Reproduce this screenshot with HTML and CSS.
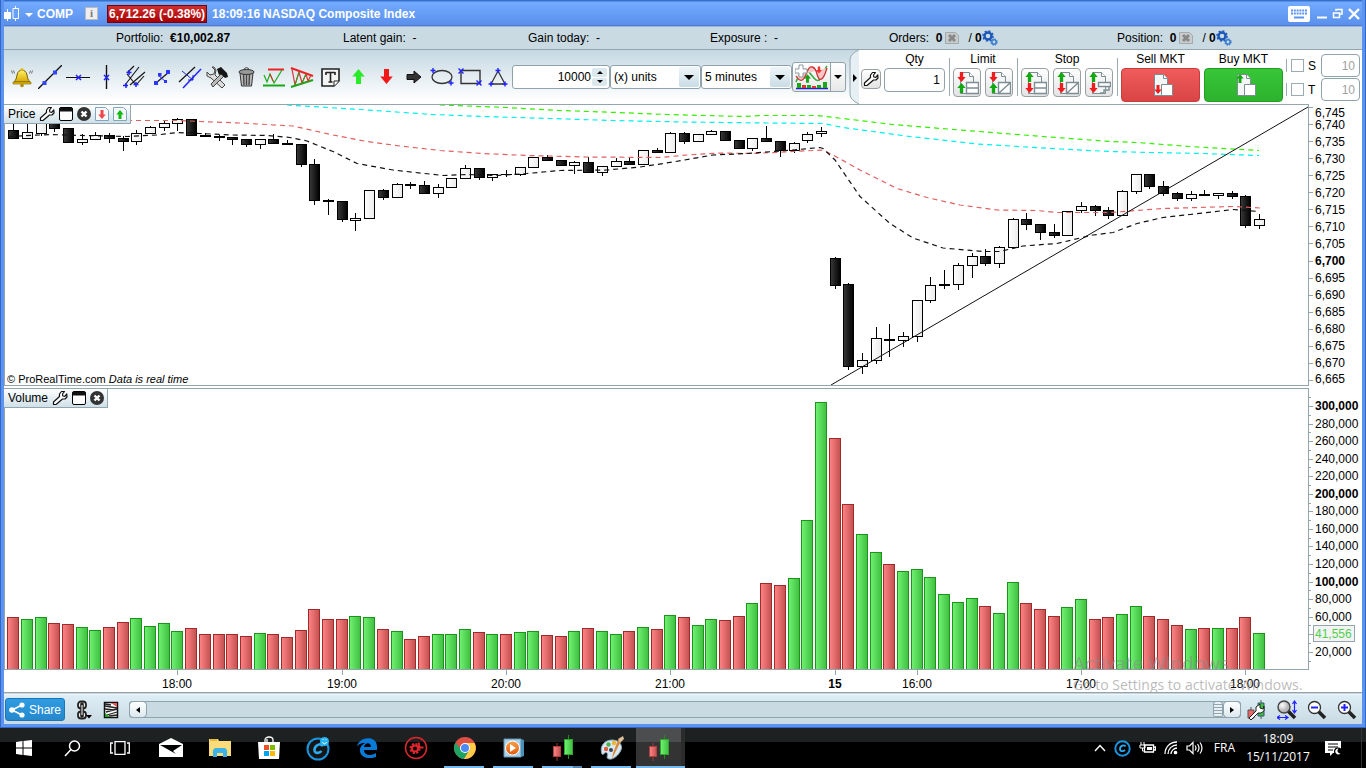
FILE: index.html
```html
<!DOCTYPE html>
<html lang="en">
<head>
<meta charset="utf-8">
<title>COMP - NASDAQ Composite Index</title>
<link rel="stylesheet" href="styles.css">
</head>
<body>
<svg class="defs" aria-hidden="true">
  <defs>
    <linearGradient id="gUp"><stop offset="0" stop-color="#72f272"/><stop offset="1" stop-color="#3fbf3f"/></linearGradient>
    <linearGradient id="gDown"><stop offset="0" stop-color="#ff8585"/><stop offset="1" stop-color="#c45050"/></linearGradient>
    <linearGradient id="gBlack"><stop offset="0" stop-color="#3a3a3a"/><stop offset="1" stop-color="#000"/></linearGradient>
    <linearGradient id="gWhite"><stop offset="0" stop-color="#fff"/><stop offset="1" stop-color="#ebebeb"/></linearGradient>
    <linearGradient id="gBell" x2="0" y2="1"><stop offset="0" stop-color="#fff36a"/><stop offset="1" stop-color="#d9a800"/></linearGradient>
    <linearGradient id="gMedia" x2="0" y2="1"><stop offset="0" stop-color="#f9a34b"/><stop offset="1" stop-color="#e2580c"/></linearGradient>
    <radialGradient id="gLens" cx=".35" cy=".35"><stop offset="0" stop-color="#fff"/><stop offset="1" stop-color="#b5b5b5"/></radialGradient>
  </defs>
  <symbol id="wrench" viewBox="0 0 16 16"><path d="M9.500 1.500h3l-2 2.500.3 2 2 .3 2-2.300.2 3-2 2h-2.500L4 14.500H1.500v-2.500L7.500 6.500V4z" fill="#fff" stroke="#111" stroke-width="1.200" stroke-linejoin="round"/></symbol>
  <symbol id="winbox" viewBox="0 0 14 14"><rect x=".5" y=".5" width="13" height="13" rx="1.500" fill="#fff" stroke="#000"/><path d="M.5 1h13v3.500H.5z" fill="#111"/></symbol>
  <symbol id="close" viewBox="0 0 14 14"><circle cx="7" cy="7" r="7" fill="#333"/><path d="M4.500 4.500l5 5m0-5l-5 5" stroke="#fff" stroke-width="2.400"/></symbol>
  <symbol id="dn" viewBox="0 0 10 12"><path d="M3 0h4v6h3l-5 6-5-6h3z"/></symbol>
  <symbol id="up" viewBox="0 0 10 12"><path d="M3 12h4V6h3L5 0 0 6h3z"/></symbol>
  <symbol id="doc" viewBox="0 0 22 24"><path d="M5.500 1.500h9l4 4v17h-13z" fill="#f4f6f6" stroke="#7d8d94"/><path d="M14.500 1.500v4h4" fill="#fff" stroke="#7d8d94"/></symbol>
  <symbol id="gears" viewBox="0 0 16 16"><circle cx="6" cy="6" r="3.500" fill="none" stroke="#1d58b8" stroke-width="2.400"/><circle cx="6" cy="6" r="5" fill="none" stroke="#1d58b8" stroke-width="1.600" stroke-dasharray="2 1.900"/><circle cx="12" cy="12" r="2.200" fill="none" stroke="#3b7cd0" stroke-width="1.600"/><circle cx="12" cy="12" r="3.300" fill="none" stroke="#3b7cd0" stroke-dasharray="1.400 1.200"/></symbol>
  <symbol id="cancel" viewBox="0 0 14 12"><path d="M.5.5h10l3 3v8H.5z" fill="#c9cccc" stroke="#a5a9a9"/><path d="M4 3l6 6m0-6L4 9" stroke="#888" stroke-width="3"/></symbol>
  <symbol id="candles" viewBox="0 0 22 26"><path d="M5 8v18" stroke="#9a3a3a"/><rect x="1.500" y="11.500" width="7" height="10" fill="url(#gDown)" stroke="#b04040"/><path d="M16.500 0v24" stroke="#1a8f1a"/><rect x="12.500" y="4.500" width="8" height="15" fill="url(#gUp)" stroke="#2ea52e"/></symbol>
</svg>

<main class="window">
  <header class="titlebar">
    <svg width="16" height="16" viewBox="0 0 16 16"><path d="M3.500 3v12" stroke="#fff"/><path d="M0 6h7v7H0z" fill="#fff"/><path d="M11.500 0v15" stroke="#fff"/><path d="M9 2.500h5.500v10H9z" fill="#68a2f8" stroke="#fff"/></svg>
    <span class="caret"></span>
    <strong class="symbol">COMP</strong>
    <span class="info-badge">i</span>
    <strong class="quote">6,712.26 (-0.38%)</strong>
    <strong>18:09:16</strong><strong class="name">NASDAQ Composite Index</strong>
    <span class="grow"></span>
    <svg class="keyboard" width="22" height="16" viewBox="0 0 22 16"><rect width="22" height="16" rx="2" fill="#fff"/><path d="M3 4.500h16M3 7.500h16" stroke="#5b93ee" stroke-width="2" stroke-dasharray="2 .8"/><path d="M6 11.500h10" stroke="#5b93ee" stroke-width="2"/></svg>
    <button class="win-btn" aria-label="Minimize"><svg width="12" height="12" viewBox="0 0 12 12"><path d="M1 9.500h10" stroke="#fff" stroke-width="2"/></svg></button>
    <button class="win-btn" aria-label="Restore"><svg width="12" height="12" viewBox="0 0 12 12"><path d="M4 3V1.500h6v4.500H8M1.500 5h6v4.500h-6z" fill="none" stroke="#fff" stroke-width="1.500"/></svg></button>
    <button class="win-btn" aria-label="Close"><svg width="12" height="12" viewBox="0 0 12 12"><path d="M1 1l10 10M11 1L1 11" stroke="#fff" stroke-width="2.400"/></svg></button>
  </header>

  <section class="account">
    <span>Portfolio:&nbsp; <b>€10,002.87</b></span>
    <span>Latent gain:&nbsp; -</span>
    <span>Gain today:&nbsp; -</span>
    <span>Exposure :&nbsp; -</span>
    <span class="count">Orders:&nbsp; <b>0</b><svg class="cancel" width="14" height="12"><use href="#cancel"/></svg>/ <b>0</b><svg width="16" height="16"><use href="#gears"/></svg></span>
    <span class="count">Position:&nbsp; <b>0</b><svg class="cancel" width="14" height="12"><use href="#cancel"/></svg>/ <b>0</b><svg width="16" height="16"><use href="#gears"/></svg></span>
  </section>

  <section class="toolbar">
    <div class="tools">
      <button aria-label="Alert"><svg viewBox="0 0 24 24"><path d="M4 17c2-2 2.500-4 3-7C7.500 6.500 10 5 12 5s4.500 1.500 5 5c.5 3 1 5 3 7z" fill="url(#gBell)" stroke="#7a6200"/><path d="M3 17h18v2H3z" fill="#e5bd12" stroke="#7a6200" stroke-width=".6"/><circle cx="12" cy="20.500" r="1.800" fill="#b08c00"/><circle cx="12" cy="4.500" r="1.500" fill="#e5bd12"/><path d="M3.500 5.500l1 3M1.500 5.500l1 3M20.500 5.500l-1 3M22.500 5.500l-1 3" stroke="#555" stroke-width=".8"/></svg></button>
      <button aria-label="Line"><svg viewBox="0 0 24 24"><path d="M0 24L24 0" stroke="#111" stroke-width="1.300"/><path d="M4.500 16h4v4h-4zM15 5.500h4v4h-4z" fill="#3344ff"/></svg></button>
      <button aria-label="Horizontal line"><svg viewBox="0 0 24 24"><path d="M0 12.500h24" stroke="#111"/><path d="M10 10l5 5m0-5l-5 5" stroke="#22f" stroke-width="1.500"/></svg></button>
      <button aria-label="Vertical line"><svg viewBox="0 0 24 24"><path d="M12.500 0v24" stroke="#111" stroke-width="1.400"/><path d="M10 10l5 5m0-5l-5 5" stroke="#22f" stroke-width="1.500"/></svg></button>
      <button aria-label="Pitchfork"><svg viewBox="0 0 24 24"><path d="M3 20L17 2M8 20L23 7M5 9l9 11M5 8L12 1M14 20l8-9" stroke="#111" stroke-width="1.100"/><path d="M4 18v5m-3-2.500h5M14 17v5m-2.500-2.500h5M7 5v5M4.500 7.500h5" stroke="#22f" stroke-width="1.500"/></svg></button>
      <button aria-label="Segment"><svg viewBox="0 0 24 24"><path d="M6 18L19 7" stroke="#111" stroke-width="1.200"/><path d="M8 10l8 7" stroke="#22f"/><path d="M4 16h4v4H4zM16 5h4v4h-4zM8 8h3.500v3.500H8zM14 15h3v3h-3z" fill="#2b36ff"/></svg></button>
      <button aria-label="Channel"><svg viewBox="0 0 24 24"><path d="M1 17L17 2" stroke="#111" stroke-width="1.200"/><path d="M5 23L23 4" stroke="#22f" stroke-width="1.500"/><path d="M4 6l11 9m0-5v5h-5" stroke="#22c" fill="none"/></svg></button>
      <button aria-label="Tools"><svg viewBox="0 0 24 24"><path d="M6 2l3 3-1 4-4 1-3-3v4l4 2 11 10 3-3L9 10l1-5-2-3z" fill="#ddd" stroke="#444"/><path d="M5 19L15 9l3 2L7 22z" fill="#bbb" stroke="#444"/><path d="M11 4l4-2 6 6 1 4-3 1-4-4-2 1z" fill="#151515"/></svg></button>
      <button aria-label="Delete"><svg viewBox="0 0 24 24"><path d="M6 8h13l-1.500 13h-10z" fill="#bbb" stroke="#333"/><path d="M9.500 9l.5 11M12.500 9v11M15.500 9l-.5 11" stroke="#444" stroke-width="1.400"/><ellipse cx="12.500" cy="7" rx="7.500" ry="2.500" fill="#999" stroke="#333"/><path d="M10 5c0-3 5-3 5 0" fill="none" stroke="#333"/></svg></button>
      <button aria-label="Range"><svg viewBox="0 0 24 24"><path d="M6 4.500h16" stroke="#e22" stroke-width="2"/><path d="M1 20.500h22" stroke="#1aa81a" stroke-width="2"/><path d="M2 10l3 7 3-8 4 9 8-13" fill="none" stroke="#1aa81a" stroke-width="1.200"/><path d="M8 9l3 7" stroke="#e22"/></svg></button>
      <button aria-label="Triangle pattern"><svg viewBox="0 0 24 24"><path d="M1 3l22 8" stroke="#e22" stroke-width="2"/><path d="M1 22l22-7" stroke="#1aa81a" stroke-width="2"/><path d="M2 4l3 16 4-13 3 11 4-9 2 7 3-6" fill="none" stroke="#d33" stroke-width="1.200"/><path d="M5 20L9 7m3 11l4-9" stroke="#1aa81a"/></svg></button>
      <button aria-label="Text"><svg viewBox="0 0 24 24"><path d="M4 4h17v12l-5 5H4z" fill="#f4f4f4" stroke="#222" stroke-width="1.600"/><path d="M16 21v-5h5" fill="#fff" stroke="#222"/><path d="M8 7.500h9M12.500 8v9M10.500 17h4M8 7v3M17 7v3" stroke="#222" stroke-width="1.600" fill="none"/></svg></button>
      <button aria-label="Up arrow"><svg viewBox="0 0 24 24"><use href="#up" x="6" y="4" width="13" height="15" fill="#2bea2b"/></svg></button>
      <button aria-label="Down arrow"><svg viewBox="0 0 24 24"><use href="#dn" x="6" y="4" width="13" height="15" fill="#f01818"/></svg></button>
      <button aria-label="Right arrow"><svg viewBox="0 0 24 24"><path d="M5 9.500h7V6l7 6-7 6v-3.500H5z" fill="#333" stroke="#111"/></svg></button>
      <button aria-label="Ellipse"><svg viewBox="0 0 24 24"><ellipse cx="12" cy="12" rx="10" ry="6.500" fill="none" stroke="#333" stroke-width="1.300"/><path d="M3 3v5M.5 5.500h5M21 15.500v5m-2.500-2.500h5" stroke="#22f" stroke-width="1.400"/></svg></button>
      <button aria-label="Rectangle"><svg viewBox="0 0 24 24"><path d="M3 5.500h19v13H3z" fill="none" stroke="#333" stroke-width="1.400"/><path d="M.5 3.500l5 5m0-5l-5 5M18.500 15.500l5 5m0-5l-5 5" stroke="#22f" stroke-width="1.400"/></svg></button>
      <button aria-label="Triangle"><svg viewBox="0 0 24 24"><path d="M12 6l7 13H5z" fill="none" stroke="#333" stroke-width="1.300"/><path d="M12 3v5M9.500 5.500h5M5 16.500v5M2.500 19h5M19 16.500v5m-2.500-2.500h5" stroke="#22f" stroke-width="1.400"/></svg></button>
    </div>
    <div class="spin">
      <input type="text" value="10000" aria-label="Amount">
      <div class="steps"><button aria-label="Increase"><i class="tri-up"></i></button><button aria-label="Decrease"><i class="tri-down"></i></button></div>
    </div>
    <div class="pick"><select aria-label="Unit"><option>(x) units</option></select></div>
    <div class="pick"><select aria-label="Timeframe"><option>5 minutes</option></select></div>
    <div class="indicator">
      <button aria-label="Add indicator"><svg width="34" height="26" viewBox="0 0 34 26"><path d="M1 18C5 8 9 2 14 8s8 12 12 6 4-10 6-12" fill="none" stroke="#2faf3f" stroke-width="1.600"/><path d="M1 12c5 8 8 4 11-4s8-6 10 2 6 8 10-6" fill="#f7c7c7" stroke="#c33" stroke-width="1.300"/><path d="M4 1h4v4h4v4H8v4H4V9H0V5h4z" fill="#fff" stroke="#8b9aa0"/><use href="#up" x="9" y="10" width="7" height="9" fill="#13a013"/><use href="#dn" x="21" y="2" width="6" height="8" fill="#e33"/><path d="M1 24.500h32" stroke="#22d" stroke-width="1.500"/><path d="M2 19h4v5H2zM12 21h4v3h-4zM22 21h4v3h-4zM28 18h4v6h-4z" fill="#1aa81a"/><path d="M7 21h4v3H7zM17 22h4v2h-4z" fill="#d33"/></svg></button>
      <button class="more" aria-label="More"><i class="tri-down big"></i></button>
    </div>
    <div class="trade">
      <svg class="edge" width="10" height="54" viewBox="0 0 10 54"><path d="M10 0h-.5Q1 4 1 10v34q0 6 9 10" fill="#e6eff3" stroke="#96a8b0"/><path d="M4 24l4 4-4 4z" fill="#000"/></svg>
      <div class="setup"><button class="sq wrench" aria-label="Order settings"><svg width="16" height="16"><use href="#wrench"/></svg></button></div>
      <label class="group qty">Qty<input type="text" value="1"></label>
      <div class="group sep"><span>Limit</span><div class="pair">
        <button class="sq" aria-label="Limit sell buy"><svg viewBox="0 0 24 24"><use href="#doc" width="22" height="24"/><use href="#dn" x="2" y="1" width="9" height="10" fill="#ee1c1c"/><use href="#up" x="2" y="12" width="9" height="10" fill="#12a812"/><path d="M11.500 11.500h12v11h-12zM11 17h13" fill="#fff" stroke="#7d8d94" stroke-width="1.400"/></svg></button>
        <button class="sq" aria-label="Limit by line"><svg viewBox="0 0 24 24"><use href="#doc" width="22" height="24"/><use href="#dn" x="2" y="1" width="9" height="10" fill="#ee1c1c"/><use href="#up" x="2" y="12" width="9" height="10" fill="#12a812"/><path d="M11.500 11.500h12v11h-12zM12 22L23 12" fill="#fff" stroke="#7d8d94" stroke-width="1.400"/></svg></button></div></div>
      <div class="group sep"><span>Stop</span><div class="pair">
        <button class="sq" aria-label="Stop order"><svg viewBox="0 0 24 24"><use href="#doc" width="22" height="24"/><use href="#up" x="2" y="1" width="9" height="10" fill="#12a812"/><use href="#dn" x="2" y="12" width="9" height="10" fill="#ee1c1c"/><path d="M11.500 11.500h12v11h-12zM11 17h13" fill="#fff" stroke="#7d8d94" stroke-width="1.400"/></svg></button>
        <button class="sq" aria-label="Stop by line"><svg viewBox="0 0 24 24"><use href="#doc" width="22" height="24"/><use href="#up" x="2" y="1" width="9" height="10" fill="#12a812"/><use href="#dn" x="2" y="12" width="9" height="10" fill="#ee1c1c"/><path d="M11.500 11.500h12v11h-12zM12 22L23 12" fill="#fff" stroke="#7d8d94" stroke-width="1.400"/></svg></button>
        <button class="sq" aria-label="Trailing stop"><svg viewBox="0 0 24 24"><use href="#doc" width="22" height="24"/><use href="#up" x="2" y="1" width="9" height="10" fill="#12a812"/><use href="#dn" x="2" y="12" width="9" height="10" fill="#ee1c1c"/><path d="M11.500 11.500h12v4h-12zM22 16v3h-5v3h-4" fill="#fff" stroke="#7d8d94" stroke-width="1.400"/></svg></button></div></div>
      <div class="group sep"><span>Sell MKT</span><button class="mkt sell" aria-label="Sell at market"><svg viewBox="0 0 24 24"><use href="#doc" width="22" height="24"/><path d="M12.500 11.500h11v11h-11z" fill="#fff" stroke="#7d8d94"/><use href="#dn" x="5" y="12" width="8" height="9" fill="#ee1c1c"/></svg></button></div>
      <div class="group"><span>Buy MKT</span><button class="mkt buy" aria-label="Buy at market"><svg viewBox="0 0 24 24"><use href="#doc" width="22" height="24"/><path d="M12.500 11.500h11v11h-11z" fill="#fff" stroke="#7d8d94"/><use href="#up" x="4" y="1" width="8" height="9" fill="#12a812"/></svg></button></div>
      <div class="stops">
        <div><input type="checkbox" id="st-s"><label for="st-s">S</label><input type="text" value="10" aria-label="Stop distance"></div>
        <div><input type="checkbox" id="st-t"><label for="st-t">T</label><input type="text" value="10" aria-label="Target distance"></div>
      </div>
    </div>
  </section>

  <section class="charts">
    <div class="chart price" id="price">
      <div class="tag"><span>Price</span><svg width="16" height="16"><use href="#wrench"/></svg><svg width="14" height="14"><use href="#winbox"/></svg><svg width="14" height="14"><use href="#close"/></svg><svg width="14" height="14" viewBox="0 0 14 14"><path d="M.5.5h10l3 3v10H.5z" fill="#f5f9fb" stroke="#83a6c0"/><use href="#dn" x="3" y="3" width="8" height="9" fill="#f04848"/></svg><svg width="14" height="14" viewBox="0 0 14 14"><path d="M.5.5h10l3 3v10H.5z" fill="#f5f9fb" stroke="#83a6c0"/><use href="#up" x="3" y="3" width="8" height="9" fill="#12b812"/></svg></div>
      <div class="credit">© ProRealTime.com <i>Data is real time</i></div>
    </div>
    <div class="chart volume" id="volume">
      <div class="tag"><span>Volume</span><svg width="16" height="16"><use href="#wrench"/></svg><svg width="14" height="14"><use href="#winbox"/></svg><svg width="14" height="14"><use href="#close"/></svg></div>
      <div class="activate"><p>Activate Windows</p><span>Go to Settings to activate Windows.</span></div>
    </div>
  </section>

  <footer class="bottombar">
    <button class="share"><svg width="16" height="16" viewBox="0 0 16 16"><path d="M13 3L3 8l10 5" fill="none" stroke="#fff" stroke-width="1.600"/><circle cx="13" cy="3" r="2.600" fill="#fff"/><circle cx="3" cy="8" r="2.800" fill="#fff"/><circle cx="13" cy="13" r="2.600" fill="#fff"/></svg>Share</button>
    <svg class="chain" width="18" height="20" viewBox="0 0 18 20"><rect x="3" y="1.500" width="8" height="7" rx="3" fill="#eee" stroke="#222" stroke-width="1.800"/><rect x="3" y="11.500" width="8" height="7" rx="3" fill="#eee" stroke="#222" stroke-width="1.800"/><path d="M7 4v12" stroke="#222" stroke-width="3.600" stroke-linecap="round"/><path d="M7 5v10" stroke="#ddd" stroke-width="1.200"/><path d="M11 15h6l-3 3.500z"/></svg>
    <svg width="16" height="18" viewBox="0 0 16 18"><path d="M1.500 1.500h13v15h-13z" fill="#fff" stroke="#111" stroke-width="1.500"/><path d="M2 5l12 2M2 8l9 1M3 11l11-3M4 14l10-3M2 3l6 1M6 15l8-1" stroke="#222" stroke-width="1.300"/><path d="M8 2h6v4z" fill="#e55"/><path d="M2 16v-4l5 4z" fill="#1aa81a"/></svg>
    <div class="scroll"><button aria-label="Scroll left"><i class="tri-left"></i></button><span class="track"></span><span class="thumb"></span><button aria-label="Scroll right"><i class="tri-right"></i></button></div>
    <button class="plain" aria-label="Chart settings"><svg viewBox="0 0 20 20"><path d="M4 7v13" stroke="#555"/><path d="M1 10h6v8H1z" fill="#e66" stroke="#555"/><path d="M14 0v19" stroke="#555"/><path d="M11 3h6v13h-6z" fill="#3cc43c" stroke="#357"/><path d="M2 18l7-7V7l4-3v4l3 1 1-3v5l-3 2h-3l-7 7z" fill="#fff" stroke="#222"/></svg></button>
    <button class="plain" aria-label="Fit"><svg viewBox="0 0 20 20"><path d="M10 10l8 8" stroke="#222" stroke-width="3.500"/><circle cx="7" cy="7" r="6" fill="url(#gLens)" stroke="#444" stroke-width="1.400"/><path d="M17.500 2v10M15.500 4l2-3 2 3M15.500 10l2 3 2-3M1 17.500h9M3 15.500l-3 2 3 2M8 15.500l3 2-3 2" fill="none" stroke="#22f" stroke-width="1.200"/></svg></button>
    <button class="plain" aria-label="Zoom out"><svg viewBox="0 0 20 20"><path d="M11 11l7 7" stroke="#222" stroke-width="3.500"/><circle cx="7.500" cy="7.500" r="6" fill="#fff" stroke="#333" stroke-width="1.300"/><path d="M4 7.500h7" stroke="#22f" stroke-width="2"/></svg></button>
    <button class="plain" aria-label="Zoom in"><svg viewBox="0 0 20 20"><path d="M11 11l7 7" stroke="#222" stroke-width="3.500"/><circle cx="7.500" cy="7.500" r="6" fill="#fff" stroke="#333" stroke-width="1.300"/><path d="M4 7.500h7M7.500 4v7" stroke="#22f" stroke-width="2"/></svg></button>
  </footer>
</main>

<nav class="taskbar">
  <button aria-label="Start"><svg width="16" height="16" viewBox="0 0 16 16" fill="#fff"><path d="M0 2l6.500-1v6.500H0zM7.500.9L16 0v7.500H7.500zM0 8.500h6.500V15L0 14zM7.500 8.500H16V16l-8.500-1z"/></svg></button>
  <button aria-label="Search"><svg width="17" height="17" viewBox="0 0 17 17" fill="none" stroke="#fff" stroke-width="1.500"><circle cx="10.500" cy="6" r="5"/><path d="M7 9.500L1 16"/></svg></button>
  <button aria-label="Task view"><svg width="20" height="14" viewBox="0 0 20 14" fill="none" stroke="#fff" stroke-width="1.300"><path d="M5 .7h10v12.600H5zM3 2H.7v10H3M17 2h2.300v10H17"/></svg></button>
  <button class="first" aria-label="Mail"><svg width="24" height="20" viewBox="0 0 24 20"><path d="M0 6l12-6 12 6v13H0z" fill="#fff"/><path d="M1 7h22l-9 6 3 3L1 7z" fill="#000"/></svg></button>
  <button aria-label="File Explorer"><svg width="22" height="20" viewBox="0 0 22 20"><path d="M0 1h9l1 2h12v15H0z" fill="#fbdc7a"/><path d="M1 1h7v2H1z" fill="#e9b93a"/><path d="M4 19v-7l2-2h10l2 2v7h-4v-4H8v4z" fill="#3bb2ea"/></svg></button>
  <button aria-label="Store"><svg width="24" height="24" viewBox="0 0 24 24"><path d="M8 7V4c0-4 8-4 8 0v3M10 7V3" fill="none" stroke="#fff" stroke-width="1.300"/><path d="M1 6h22l-1 17H2z" fill="#fff"/><path d="M7 9h5v5H7z" fill="#f25022"/><path d="M13 9h5v5h-5z" fill="#7fba00"/><path d="M7 15h5v5H7z" fill="#00a4ef"/><path d="M13 15h5v5h-5z" fill="#ffb900"/></svg></button>
  <button aria-label="Cacaoweb"><svg width="26" height="26" viewBox="0 0 26 26"><circle cx="13" cy="14" r="10.500" fill="#161616" stroke="#1a96e0" stroke-width="2"/><path d="M17 11.500c0-4-7-2-7.500 3-.5 4.500 5 4 7 1.500" fill="none" stroke="#29aef5" stroke-width="2.600"/><circle cx="19.500" cy="6.500" r="4.500" fill="#27b3f3"/><path d="M17.500 7c1 2.500 3 2.500 4 0M18 5v-.8M21 5v-.8" stroke="#fff" fill="none"/></svg></button>
  <button aria-label="Edge"><svg width="20" height="20" viewBox="0 0 20 20"><path d="M0 9C1-1 20-4 20 9v3H7c0 6 8 6 12 3v4C11 22 2 19 3 11c1-4 4-5 5-6-5 0-7 2-8 4zM7 9h7c0-5-6-5-7 0z" fill="#0a7ad8"/></svg></button>
  <button aria-label="Game Booster"><svg width="24" height="24" viewBox="0 0 24 24" fill="none"><circle cx="12" cy="12" r="10.500" stroke="#e0262c" stroke-width="1.500"/><circle cx="11" cy="12.500" r="3" stroke="#e0262c" stroke-width="2"/><circle cx="11" cy="12.500" r="4.600" stroke="#e0262c" stroke-width="2" stroke-dasharray="2.200 1.400"/><path d="M15 6.500v5h4.500" stroke="#e0262c" stroke-width="1.800"/></svg></button>
  <button class="open" aria-label="Chrome"><svg width="22" height="22" viewBox="0 0 22 22"><circle cx="11" cy="11" r="11" fill="#dd5144"/><path d="M1.500 5.500A11 11 0 0 0 10 22l5-8.500-8-1z" fill="#1da462"/><path d="M10 22A11 11 0 0 0 20.500 6H11l4.500 7z" fill="#ffcd46"/><circle cx="11" cy="11" r="5" fill="#fff"/><circle cx="11" cy="11" r="4" fill="#4c8bf5"/></svg></button>
  <button class="open" aria-label="Media player"><svg width="22" height="20" viewBox="0 0 22 20"><path d="M1 1h17v18H1z" fill="#a9d2e8" stroke="#6295b5"/><path d="M18 1l3 1v16l-3 1z" fill="#4990b8"/><circle cx="9.500" cy="10" r="7" fill="url(#gMedia)" stroke="#fff"/><path d="M7 6l6 4-6 4z" fill="#fff"/></svg></button>
  <button class="open double" aria-label="ProRealTime"><svg width="22" height="26"><use href="#candles"/></svg></button>
  <button class="open" aria-label="Paint"><svg width="24" height="24" viewBox="0 0 24 24"><path d="M2 18C-1 10 5 4 12 4s11 5 9 10-8 10-12 9 0-4-2-6-4 3-5 1z" fill="#d8e9f5" stroke="#8ab"/><circle cx="6" cy="13" r="2.200" fill="#e25a3a"/><circle cx="8.500" cy="8.500" r="2.200" fill="#4db04a"/><circle cx="14" cy="7" r="2.200" fill="#f1b52a"/><circle cx="11" cy="14" r="2" fill="#345"/><path d="M12 23l9-18-3-1-5 13z" fill="#d98a3c"/><path d="M18 3l5-3 1 3-4 4z" fill="#ddc09a"/></svg></button>
  <button class="open active" aria-label="ProRealTime chart"><svg width="22" height="26"><use href="#candles"/></svg></button>
  <span class="grow"></span>
  <div class="tray">
    <svg width="12" height="8" viewBox="0 0 12 8"><path d="M1 7l5-5.500L11 7" fill="none" stroke="#fff" stroke-width="1.400"/></svg>
    <svg width="17" height="17" viewBox="0 0 17 17"><circle cx="8.500" cy="8.500" r="7.200" fill="none" stroke="#1a96e0" stroke-width="2"/><path d="M11.500 6.500c-1-2-5.500-1-5.500 2.500 0 3 3.500 2.500 5 1" fill="none" stroke="#29aef5" stroke-width="1.800"/></svg>
    <svg width="17" height="12" viewBox="0 0 17 12"><path d="M5.500 3h9v7h-9zM15 5h1.500v3H15" fill="none" stroke="#fff" stroke-width="1.300"/><path d="M8 5h5v3H8z" fill="#fff"/><path d="M2 0v3M5 0v3M1 3h5v3H1zM3.500 6v3h2" fill="none" stroke="#fff"/></svg>
    <svg width="14" height="14" viewBox="0 0 14 14" fill="none" stroke="#fff" stroke-width="1.300"><path d="M1 13C1 6 6 1 13 1M4 13c0-5 4-9 9-9M7 13c0-3 3-6 6-6"/><circle cx="11.500" cy="11.500" r="1.200" fill="#fff"/></svg>
    <svg width="17" height="14" viewBox="0 0 17 14" fill="none" stroke="#fff" stroke-width="1.200"><path d="M1 5h2.500L7 1.500v11L3.500 9H1zM9 4.500q2 2.500 0 5M11.500 3q3 4 0 8M14 1.500q4 5.500 0 11"/></svg>
    <span class="lang">FRA</span>
    <div class="clock"><span>18:09</span><span>15/11/2017</span></div>
    <svg class="note" width="18" height="18" viewBox="0 0 18 18"><path d="M1 2h16v12H9l-3 3v-3H1z" fill="#fff"/><path d="M4 5h10M4 8h10M4 11h5" stroke="#000" stroke-width="1.200"/><circle cx="14" cy="12.500" r="4" fill="#000"/><path d="M14.500 9.500a3 3 0 1 0 2 5c-3 0-4-3-2-5z" fill="#fff"/></svg>
  </div>
</nav>
<script src="chart.js"></script>
</body>
</html>
```

FILE: styles.css
```css
* { box-sizing: border-box; }
body { margin: 0; min-height: 100vh; display: flex; flex-direction: column; background: #000; color: #000; font: 12px/16px "Liberation Sans", Arial, sans-serif; }
button, input, select { font: inherit; color: inherit; margin: 0; padding: 0; border: 0; background: none; }
svg { display: block; flex: none; }
.defs { position: absolute; width: 0; height: 0; }
.grow { flex: 1; }
i[class^="tri"] { display: block; width: 0; height: 0; border: 3px solid transparent; }
.tri-up { border-top: 0 !important; border-bottom-color: #000 !important; }
.tri-down { border-bottom: 0 !important; border-top-color: #000 !important; }
i.tri-down.big { border-width: 4px; }
.tri-left { border-left: 0 !important; border-right: 4px solid #000 !important; }
.tri-right { border-right: 0 !important; border-left: 4px solid #000 !important; }

.window { flex: 1; display: flex; flex-direction: column; padding: 0 4px 4px; background: #5b93ee; box-shadow: inset 1px 0 #3168c8, inset -1px -1px #3168c8; }

.titlebar { display: flex; align-items: center; height: 27px; color: #fff; background: linear-gradient(#3570cc 1px, #73abff 2px, #5a90ec 25px, #3a68b8 26px, #fff 27px); }
.caret { margin: 2px 4px 0 5px; border: 4px solid transparent; border-top-color: #fff; border-bottom: 0; }
.info-badge { width: 13px; height: 13px; margin: 0 9px 0 12px; background: #eee; border: 1px solid #bbb; color: #777; font: bold 11px/11px "Liberation Serif", serif; text-align: center; }
.quote { height: 18px; padding: 0 1px; margin-right: 5px; line-height: 17px; background: linear-gradient(#d03030, #a80000); border: 1px solid #700; }
.name { margin-left: 3px; }
.keyboard { margin-right: 4px; }
.win-btn { width: 16px; display: flex; justify-content: center; }

.account { display: grid; grid-template-columns: 227fr 185fr 182fr 179fr 228fr 245fr; align-items: center; height: 23px; padding-left: 112px; background: #c9dae3; border-bottom: 1px solid #93a5ad; }
.count { display: flex; align-items: center; white-space: pre; }
.cancel { margin: 0 9px 0 3px; }

.toolbar { display: flex; align-items: center; height: 54px; background: linear-gradient(#c5d8e2, #fff 50px); overflow: hidden; }
.tools { display: flex; flex: none; padding-left: 4px; }
.tools button { width: 28px; height: 28px; display: flex; align-items: center; justify-content: center; }
.tools svg { width: 24px; height: 24px; }
.spin, .pick, .indicator { flex: none; height: 24px; border: 1px solid #8fa3ad; border-radius: 3px; background: #fff; display: flex; }
.spin { width: 98px; padding: 2px; }
.spin input { flex: 1; width: 0; text-align: right; padding-right: 1px; }
.steps { width: 15px; display: flex; flex-direction: column; gap: 1px; }
.steps button { flex: 1; display: flex; align-items: center; justify-content: center; background: #dbe8ee; border-radius: 2px; }
.pick { position: relative; width: 91px; }
.pick select { width: 100%; padding-left: 3px; appearance: none; }
.pick::before { content: ""; position: absolute; right: 1px; top: 1px; bottom: 1px; width: 20px; background: linear-gradient(#eef5f8, #c9dce5); border-radius: 2px; pointer-events: none; }
.pick::after { content: ""; position: absolute; right: 6px; top: 9px; border: 5px solid transparent; border-top-color: #000; border-bottom: 0; pointer-events: none; }
.indicator { width: 54px; height: 30px; background: linear-gradient(#fff, #e8e8e8); }
.indicator button { flex: 1; display: flex; align-items: center; justify-content: center; }
.indicator .more { flex: none; width: 15px; border-left: 1px solid #8fa3ad; }

.trade { flex: 1; min-width: 0; align-self: stretch; display: flex; margin-left: 3px; }
.trade > :not(.edge) { background: #fff; }
.setup { padding: 19px 1px 0 2px; }
.group { flex: none; display: flex; flex-direction: column; align-items: center; padding: 2px 2px 0; gap: 1px; position: relative; line-height: 15px; }
.sep { padding-left: 6px; }
.sep::before { content: ""; position: absolute; left: 2px; top: 8px; bottom: 8px; border-left: 1px solid #9aabb2; }
.pair { display: flex; gap: 4px; }
.sq { width: 28px; height: 29px; border: 1px solid #98a0a4; border-radius: 4px; background: linear-gradient(#fff, #e3e3e3); display: flex; align-items: center; justify-content: center; }
.sq svg { width: 24px; height: 24px; }
.sq.wrench { width: 20px; height: 20px; }
.sq.wrench svg { width: 16px; height: 16px; }
.qty input { width: 61px; height: 24px; padding-right: 4px; border: 1px solid #8fa3ad; border-radius: 4px; text-align: right; }
.mkt { width: 79px; height: 34px; display: flex; align-items: center; justify-content: center; border-radius: 4px; }
.mkt svg { width: 24px; height: 24px; }
.sell { background: linear-gradient(#f05c5c, #d94444); border: 1px solid #c83c3c; }
.buy { background: linear-gradient(#38c638, #2db22d); border: 1px solid #229c22; }
.stops { flex: 1; min-width: 0; display: flex; flex-direction: column; gap: 1px; padding: 4px 2px 0 1px; }
.stops div { display: flex; align-items: center; gap: 4px; padding-left: 5px; position: relative; }
.stops div::before { content: ""; position: absolute; left: 0; top: 5px; bottom: 5px; border-left: 1px solid #9aabb2; }
.stops input[type="checkbox"] { flex: none; appearance: none; width: 13px; height: 13px; border: 1px solid #9aabb2; background: #fff; }
.stops label { width: 9px; }
.stops input[type="text"] { flex: 1; width: 0; height: 23px; padding-right: 4px; border: 1px solid #8fa3ad; border-radius: 4px; text-align: right; color: #a0a0a0; }

.charts { flex: 1; display: flex; flex-direction: column; min-height: 0; background: #fff; }
.chart { position: relative; flex: 284 1 0; min-height: 0; overflow: hidden; }
.chart.volume { flex-grow: 304; }
.plot { position: absolute; left: 0; top: 0; }
.plot rect, .plot .crisp { shape-rendering: crispEdges; }
.plot text { font: 12px "Liberation Sans", Arial, sans-serif; }
.plot text.strong { font-weight: bold; }
.tag { position: absolute; z-index: 1; left: 0; top: 0; display: flex; align-items: center; gap: 4px; height: 20px; padding: 0 3px 0 4px; background: linear-gradient(#fff, #cfe0e8); border: solid #93a5ad; border-width: 1px 1px 1px 0; }
.credit { position: absolute; z-index: 1; left: 3px; bottom: 2px; font-size: 11px; line-height: 14px; }
.activate { position: absolute; z-index: 1; right: 52px; bottom: -3px; width: 237px; color: rgba(140, 140, 140, .6); font: 14px/20px "Open Sans", sans-serif; white-space: nowrap; pointer-events: none; }
.activate p { margin: 0; font-size: 19px; line-height: 24px; }

.bottombar { display: flex; align-items: center; gap: 10px; height: 32px; padding: 3px 5px 0 1px; background: linear-gradient(#93a5ad 1px, #fff 2px, #deeef6 3px, #c9dae3); }
.share { display: flex; align-items: center; gap: 4px; width: 60px; height: 23px; padding-left: 3px; background: linear-gradient(#2f9ce2, #2588cd); border: 1px solid #1b76b8; border-radius: 3px; color: #fff; }
.scroll { flex: 1; display: flex; height: 17px; border: 1px solid #8fa3ad; border-radius: 3px; background: #c9dae3; }
.scroll button { width: 16px; display: flex; align-items: center; justify-content: center; background: linear-gradient(#fff, #dce9ef); border-radius: 3px; outline: 1px solid #8fa3ad; }
.track { flex: 1; }
.thumb { width: 8px; margin-right: 2px; outline: 1px solid #8fa3ad; border-radius: 2px; background: repeating-linear-gradient(#e5eff4 0 2px, #93a5ad 2px 3px); }
.plain { width: 20px; height: 20px; }
.plain svg { width: 20px; height: 20px; }
.scroll + .plain { margin-left: -4px; }

.taskbar { display: flex; height: 40px; background: linear-gradient(#1e2122 14px, #000 14px); color: #fff; font: 12px/18px "Open Sans", sans-serif; }
.taskbar button { width: 49px; display: flex; align-items: center; justify-content: center; position: relative; }
.taskbar button:nth-child(-n+3) { width: 48px; }
.taskbar .first { margin-left: 2px; }
.open::after { content: ""; position: absolute; left: 4px; right: 5px; bottom: 0; height: 2px; background: #76b9ed; }
.double::after { border-right: 9px solid #5686ad; }
.active { background: linear-gradient(#4c4d4e 14px, #333 14px); border-right: 4px solid #2c2c2c; }
.active::after { left: 0; right: -4px; }
.tray { display: flex; align-items: center; gap: 8px; padding-right: 19px; border-right: 1px solid #333; margin-right: 4px; }
.lang { margin-left: 3px; }
.clock { display: flex; flex-direction: column; text-align: center; width: 66px; margin-left: 2px; }
.note { margin-left: 5px; }
```

FILE: chart.js
```js
// Each candle: [filled, high, bodyTop, bodyBottom, low] in scale units (104..388 down the panel).
const candles = [
  [1,122,130,138,138],[0,122,132,138,138],[0,122,122,133,135],[1,120,120,128,131],[1,128,128,142,142],
  [0,134,139,142,144],[0,132,135,139,139],[1,133,135,138,142],[1,136,138,141,150],[0,130,133,141,144],
  [0,126,127,133,133],[0,121,123,127,130],[0,118,119,123,130],[1,119,119,135,135],[1,133,135,136,136],
  [1,135,136,137,140],[1,137,137,139,144],[1,139,139,144,146],[0,139,139,144,148],[1,134,139,143,143],
  [1,140,143,144,144],[1,144,144,164,166],[1,159,164,200,204],[1,199,200,201,214],[1,201,201,219,221],
  [0,213,218,220,230],[0,190,190,218,218],[1,189,190,197,199],[0,183,184,197,197],[1,182,184,185,188],
  [1,181,185,193,193],[0,184,187,193,197],[0,178,178,187,187],[0,165,168,178,178],[1,168,168,177,179],
  [0,174,174,177,180],[1,170,174,174,176],[0,167,167,174,175],[0,157,157,167,167],[1,155,157,160,160],
  [1,160,160,165,165],[0,161,162,165,173],[1,157,162,172,172],[0,166,166,172,175],[0,158,161,166,166],
  [1,158,161,164,164],[0,150,150,164,164],[1,148,150,152,152],[0,132,133,152,152],[1,132,133,141,143],
  [0,134,134,141,141],[0,130,131,134,134],[1,131,131,140,140],[1,140,140,148,148],[0,138,138,148,150],
  [1,126,138,141,141],[1,141,141,150,156],[0,142,143,150,152],[0,132,134,140,142],[0,127,131,133,136],
  [1,257,258,285,288],[1,283,284,366,369],[0,353,360,366,373],[0,327,338,360,363],[1,324,339,340,356],
  [0,332,336,340,346],[0,300,300,336,341],[0,277,285,300,302],[1,270,284,285,288],[0,263,265,284,289],
  [0,253,256,265,277],[1,249,256,263,265],[0,246,247,263,267],[0,218,219,247,247],[1,213,219,224,229],
  [1,224,224,232,239],[1,224,232,235,237],[0,211,211,235,235],[0,202,206,210,212],[1,205,206,210,215],
  [1,207,210,215,218],[0,190,191,215,215],[0,174,174,191,193],[1,174,174,186,188],[1,181,186,193,195],
  [1,192,193,198,200],[0,191,194,198,200],[1,190,194,195,195],[0,193,193,195,198],[1,191,193,196,198],
  [1,195,196,225,227],[0,214,219,225,228]
];
// Top of each volume bar; a negative value marks a falling period.
const volumes = [
  -617,619,617,-623,-624,627,630,-627,-622,618,626,623,631,-628,-634,-634,-634,-636,633,-634,-637,-630,-609,-619,-619,
  616,617,-629,631,-639,-636,634,634,629,-632,634,-634,632,631,-635,-636,631,-628,631,634,-631,627,-629,615,-617,625,
  619,-620,-616,603,-583,-585,578,520,402,-438,-504,534,552,-564,571,569,577,594,602,598,-606,613,582,-603,-609,-616,
  607,599,-619,-617,614,606,-616,-619,-625,629,-628,628,-628,-617,633
];
const averages = {
  '#33f000': [440,105,507,107.5,560,110.5,617,112.5,667,114.5,743,116.5,763,115.5,817,115.5,843,118.5,893,124.5,960,130,1043,136.5,1110,141.5,1137,142.5,1190,146.5,1259,150.5],
  '#00f0f0': [287,105,360,109.5,433,114.5,483,116.5,550,118.5,613,120.5,683,122,767,123,823,123.5,843,127.5,910,136.5,977,144,1060,149,1110,151.5,1150,152.5,1203,153.5,1259,155.5],
  '#e06060': [127,120.5,180,120.5,200,121.5,240,123,293,126,333,135,367,141.5,400,146,440,150.5,483,153.5,527,155.5,587,157,660,157.5,687,155,720,153,753,153.5,793,151.5,823,150,833,155,860,170,897,188.5,927,197.5,960,205,997,210,1037,210.5,1057,212.5,1110,212.5,1163,208.5,1233,206.5,1260,208],
  '#111111': [8,136.5,50,134.5,83,135.5,127,136.5,157,135,177,132.5,200,133.5,233,135,267,135.5,290,137.5,307,141,333,151.5,357,163.5,393,170,443,175.5,467,174.5,497,175.5,527,173.5,560,170.5,607,170,640,167,673,162,713,155,747,153.5,793,150,820,147.5,823,148.5,835,160,860,196.5,890,223.5,913,238,943,248,983,251.5,1000,251.5,1023,246,1057,243.5,1093,235,1113,232.5,1137,223.5,1163,217.5,1190,214.5,1233,209.5,1259,211.5]
};
const FRAME = '#93a5ad';
const AXIS = 54;

const line = (x1, y1, x2, y2, color, cls = 'crisp') =>
  `<line class="${cls}" x1="${x1}" y1="${y1}" x2="${x2}" y2="${y2}" stroke="${color}"/>`;
const text = (x, y, label, strong, anchor = 'start') =>
  `<text x="${x}" y="${y}" text-anchor="${anchor}"${strong ? ' class="strong"' : ''}>${label}</text>`;

function scales(box, top, span) {
  const w = box.clientWidth, h = box.clientHeight, right = w - AXIS;
  return {
    w, h, right,
    x: v => (v - 4) * right / 1304,
    y: v => (v - top) * h / span,
    center: i => Math.round((9.2 + 13.69 * i) * right / 1304)
  };
}

function mount(box, s, body) {
  const old = box.querySelector('.plot');
  if (old) old.remove();
  box.insertAdjacentHTML('afterbegin', `<svg class="plot" width="${s.w}" height="${s.h}">${body}</svg>`);
}

function drawPrice() {
  const box = document.getElementById('price');
  const s = scales(box, 104, 284);
  const bottom = Math.floor(s.y(385)) + .5;
  let out = '';
  candles.forEach(([filled, high, top, low, tail], i) => {
    const c = s.center(i), px = v => Math.floor(s.y(v));
    out += line(c + .5, px(high), c + .5, px(top), '#000') + line(c + .5, px(low), c + .5, px(tail) + 1, '#000');
    out += `<rect x="${c - 4.5}" y="${px(top) + .5}" width="10" height="${Math.max(px(low) - px(top), .1)}" fill="url(#${filled ? 'gBlack' : 'gWhite'})" stroke="#000"/>`;
  });
  for (const [color, p] of Object.entries(averages)) {
    let pts = '';
    for (let i = 0; i < p.length; i += 2) pts += `${s.x(p[i])},${s.y(p[i + 1])} `;
    out += `<polyline points="${pts}" fill="none" stroke="${color}" stroke-width="1.2" stroke-dasharray="5 4"/>`;
  }
  out += line(s.x(831), s.y(385), s.right, s.y(107), '#111', 'trend');
  out += line(0, .5, s.right, .5, FRAME) + line(0, bottom, s.right, bottom, FRAME) + line(.5, 0, .5, bottom, FRAME) + line(s.right + .5, 0, s.right + .5, bottom, FRAME);
  for (let p = 6745; p >= 6665; p -= 5) {
    const v = 124.5 + (6740 - p) * 3.414;
    const y = Math.floor(s.y(v)) + .5;
    out += line(s.right, y, s.right + 5, y, FRAME);
    out += text(s.right + 7, Math.round(s.y(Math.min(Math.max(v, 113), 379))) + 4, p.toLocaleString('en-US'), p % 100 === 0);
  }
  mount(box, s, out);
}

function drawVolume() {
  const box = document.getElementById('volume');
  const s = scales(box, 388, 304);
  const base = Math.round(s.y(669)) + .5;
  let out = '';
  volumes.forEach((v, i) => {
    const y = Math.floor(s.y(Math.abs(v))) + .5, up = v > 0;
    out += `<rect x="${s.center(i) - 5.5}" y="${y}" width="11" height="${base - y}" fill="url(#${up ? 'gUp' : 'gDown'})" stroke="${up ? '#1a941a' : '#a02a2a'}"/>`;
  });
  out += line(0, .5, s.right, .5, FRAME) + line(0, base, s.right, base, FRAME) + line(.5, 0, .5, base, FRAME) + line(s.right + .5, 0, s.right + .5, base, FRAME);
  for (let k = 10; k <= 310; k += 10) {
    const y = Math.round(s.y(669.3 - k * .8775)), major = k % 20 === 0;
    out += line(s.right, y + .5, s.right + (major ? 5 : 3), y + .5, FRAME);
    if (major && k !== 40) out += text(s.right + 7, y + 4, k + ',000', k % 100 === 0);
  }
  const now = Math.round(s.y(633));
  out += `<rect x="${s.right + 5.5}" y="${now - 7.5}" width="41" height="16" fill="#f4f4f4" stroke="${FRAME}"/>`;
  out += `<text x="${s.right + 7}" y="${now + 5}" fill="#4fd04f">41,556</text>`;
  const hours = { 12: '18:00', 24: '19:00', 36: '20:00', 48: '21:00', 60: '15', 66: '16:00', 78: '17:00', 90: '18:00' };
  for (const [i, label] of Object.entries(hours)) {
    const c = s.center(+i);
    out += line(c + .5, base, c + .5, base + 5, FRAME) + text(c, base + 18.5, label, label === '15', 'middle');
  }
  mount(box, s, out);
}

function draw() { drawPrice(); drawVolume(); }
window.addEventListener('resize', draw);
draw();
```
